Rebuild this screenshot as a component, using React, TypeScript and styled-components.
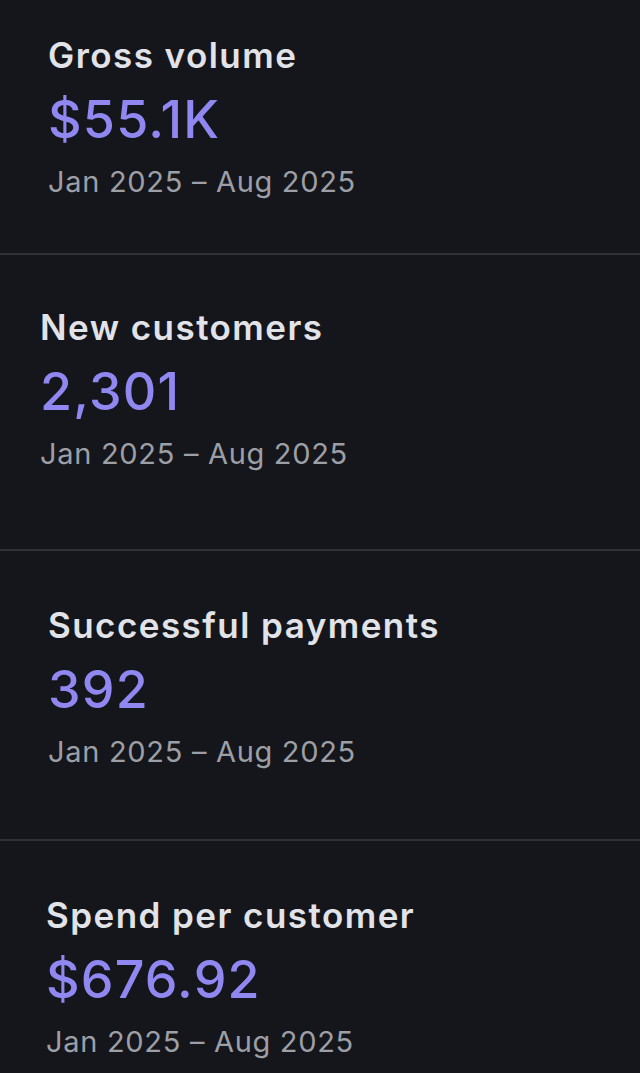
import React from "react";
import styled, { createGlobalStyle } from "styled-components";

const GlobalStyle = createGlobalStyle`
  html, body {
    margin: 0;
    padding: 0;
    background: #14161b;
  }
  body {
    font-family: Inter, "Noto Sans", "Liberation Sans", sans-serif;
    -webkit-font-smoothing: antialiased;
  }
`;

const Page = styled.main`
  display: flex;
  flex-direction: column;
  width: 640px;
  min-height: 1073px;
  background: #14161b;
`;

const Section = styled.section<{ $height: number; $padTop: number; $padLeft: number; $last?: boolean }>`
  box-sizing: border-box;
  display: flex;
  flex-direction: column;
  gap: 15px;
  height: ${(p) => p.$height}px;
  padding: ${(p) => p.$padTop}px 24px 0 ${(p) => p.$padLeft}px;
  border-bottom: ${(p) => (p.$last ? "none" : "2px solid #2e3036")};
`;

const Title = styled.h2`
  margin: 0;
  font-size: 35px;
  line-height: 40px;
  font-weight: 600;
  color: #e2e3e8;
  letter-spacing: 1.45px;
`;

const Value = styled.div`
  font-size: 52px;
  line-height: 60px;
  font-weight: 500;
  color: #9087f1;
  letter-spacing: 1.2px;
`;

const Range = styled.div`
  font-size: 29px;
  line-height: 34px;
  font-weight: 400;
  color: #9d9fa6;
  letter-spacing: 0.7px;
`;

type Metric = {
  title: string;
  value: string;
  height: number;
  padTop: number;
  padLeft: number;
};

const metrics: Metric[] = [
  { title: "Gross volume", value: "$55.1K", height: 255, padTop: 35, padLeft: 48 },
  { title: "New customers", value: "2,301", height: 296, padTop: 52, padLeft: 40 },
  { title: "Successful payments", value: "392", height: 290, padTop: 54, padLeft: 48 },
  { title: "Spend per customer", value: "$676.92", height: 232, padTop: 54, padLeft: 46 },
];

export default function App() {
  return (
    <>
      <GlobalStyle />
      <Page>
        {metrics.map((m, i) => (
          <Section
            key={m.title}
            $height={m.height}
            $padTop={m.padTop}
            $padLeft={m.padLeft}
            $last={i === metrics.length - 1}
          >
            <Title>{m.title}</Title>
            <Value>{m.value}</Value>
            <Range>Jan 2025 – Aug 2025</Range>
          </Section>
        ))}
      </Page>
    </>
  );
}
